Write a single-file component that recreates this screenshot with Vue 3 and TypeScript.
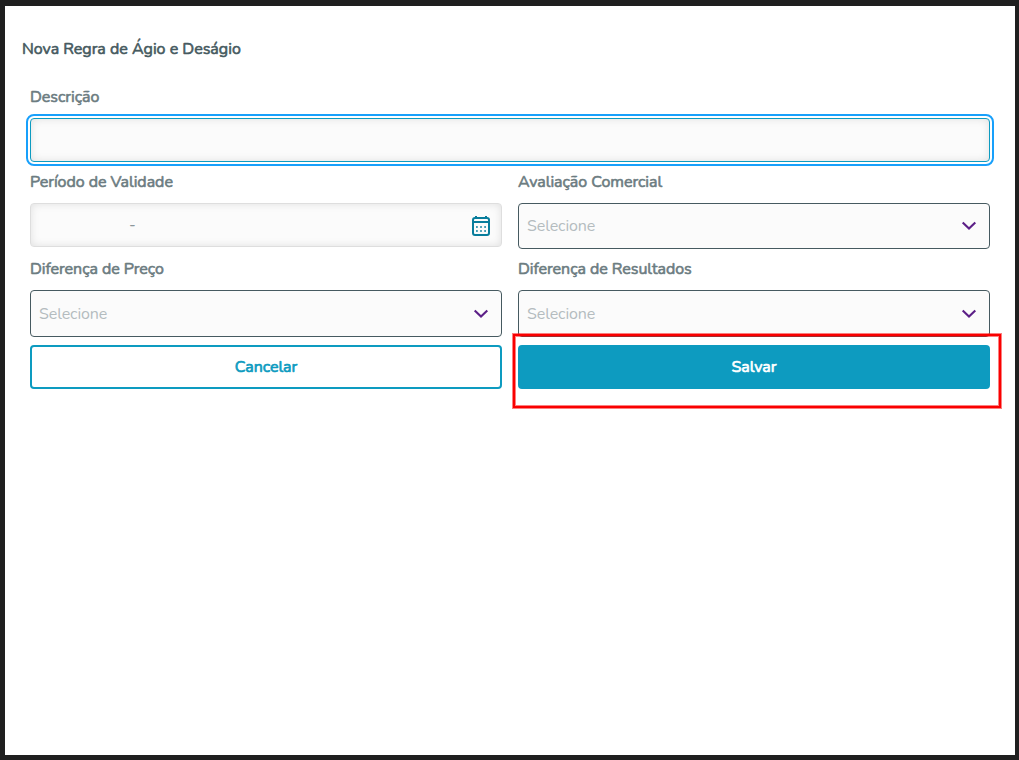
<script setup lang="ts">
import { ref } from 'vue'

interface SelectField {
  id: string
  label: string
}

const title = 'Nova Regra de Ágio e Deságio'
const description = ref('')
const comercial: SelectField = { id: 'avaliacao', label: 'Avaliação Comercial' }
const differences: SelectField[] = [
  { id: 'preco', label: 'Diferença de Preço' },
  { id: 'resultados', label: 'Diferença de Resultados' },
]
</script>

<template>
  <div class="backdrop">
    <main class="dialog">
      <h1 class="title">{{ title }}</h1>
      <form class="form" @submit.prevent>
        <div class="field wide">
          <label class="label" for="descricao">Descrição</label>
          <input id="descricao" v-model="description" class="input focused" type="text" />
        </div>

        <div class="field">
          <div class="label">Período de Validade</div>
          <div class="input period">
            <span class="dash">-</span>
            <svg class="calendar" width="20" height="22" viewBox="0 0 20 22">
              <rect x="2" y="3" width="16" height="17" rx="2" fill="none" stroke="#087d9c" stroke-width="2" />
              <path d="M2 7H18M5 1V4M15 1V4" fill="none" stroke="#087d9c" stroke-width="2" />
              <path d="M5 12H6.8M9.1 12H10.9M13.2 12H15M5 16H6.8M9.1 16H10.9M13.2 16H15" stroke="#087d9c" stroke-width="1.6" />
            </svg>
          </div>
        </div>

        <div class="field">
          <div class="label">{{ comercial.label }}</div>
          <div class="select">
            <span class="placeholder">Selecione</span>
            <svg class="chevron" width="16" height="10" viewBox="0 0 16 10">
              <path d="M1.7 1.5L8 7.6L14.3 1.5" fill="none" stroke="#5c1f87" stroke-width="2.1" />
            </svg>
          </div>
        </div>

        <div v-for="f in differences" :key="f.id" class="field">
          <div class="label">{{ f.label }}</div>
          <div class="select tall">
            <span class="placeholder">Selecione</span>
            <svg class="chevron" width="16" height="10" viewBox="0 0 16 10">
              <path d="M1.7 1.5L8 7.6L14.3 1.5" fill="none" stroke="#5c1f87" stroke-width="2.1" />
            </svg>
          </div>
        </div>

        <button class="btn outline" type="button">Cancelar</button>
        <div class="save">
          <button class="btn solid" type="submit">Salvar</button>
          <div class="marker"></div>
        </div>
      </form>
    </main>
  </div>
</template>

<style>
html, body { margin: 0; background: #1f1f1f; overflow: hidden; }
</style>

<style scoped>
.backdrop {
  box-sizing: border-box;
  width: 1019px;
  height: 760px;
  padding: 6px 4px 5px 5px;
  background: #1f1f1f;
  font-family: Nunito, Lato, "Open Sans", sans-serif;
  font-size: 16px;
}
.dialog {
  box-sizing: border-box;
  height: 749px;
  padding: 32px 25px 0;
  background: #fff;
}
.title {
  margin: 0 0 26px -8px;
  height: 22px;
  line-height: 22px;
  font-size: 16px;
  font-weight: 400;
  -webkit-text-stroke: 0.6px currentColor;
  color: #465a60;
  white-space: nowrap;
}
.form {
  display: grid;
  grid-template-columns: 472px 472px;
  column-gap: 16px;
  align-items: start;
}
.field { padding-bottom: 9px; }
.wide { grid-column: 1 / 3; }
.label {
  display: block;
  height: 22px;
  line-height: 22px;
  margin-bottom: 10px;
  font-weight: 400;
  letter-spacing: -0.04px;
  -webkit-text-stroke: 0.6px currentColor;
  color: #6c7c81;
  white-space: nowrap;
}
.input {
  display: block;
  box-sizing: border-box;
  width: 100%;
  height: 44px;
  margin: 0;
  padding: 0 8px;
  border: 1px solid #dedede;
  border-radius: 4px;
  background: #fbfbfb;
  box-shadow: inset 0 0 9px rgba(0, 0, 0, 0.11);
  font: inherit;
  outline: none;
}
.input.focused {
  border-color: #0d9bc0;
  outline: 2px solid #18a0fb;
  outline-offset: 2px;
}
.input.period {
  display: flex;
  align-items: center;
  justify-content: space-between;
  padding: 0 10px 0 98px;
  color: #8c979b;
}
.calendar { display: block; margin-top: 2px; }
.select {
  box-sizing: border-box;
  display: flex;
  align-items: center;
  justify-content: space-between;
  height: 46px;
  padding: 0 12px 0 8px;
  border: 1px solid #465a60;
  border-radius: 4px;
  background: #fbfbfb;
}
.select.tall { height: 47px; margin-bottom: -1px; }
.placeholder { color: #b4bcbf; line-height: 22px; letter-spacing: -0.1px; }
.chevron { display: block; }
.btn {
  box-sizing: border-box;
  display: block;
  width: 100%;
  height: 44px;
  padding: 0;
  border: 2px solid #0d9bc0;
  border-radius: 4px;
  font: inherit;
  letter-spacing: -0.05px;
  -webkit-text-stroke: 0.7px currentColor;
}
.outline { background: #fff; color: #0d9bc0; }
.solid { background: #0d9bc0; color: #fff; }
.save { position: relative; }
.marker {
  position: absolute;
  top: -11px;
  right: -11px;
  bottom: -19px;
  left: -5px;
  border: 2px solid #fa0000;
  box-shadow: 0 0 0 1px rgba(250, 0, 0, 0.5), inset 0 0 0 1px rgba(250, 0, 0, 0.5);
  pointer-events: none;
}
</style>
